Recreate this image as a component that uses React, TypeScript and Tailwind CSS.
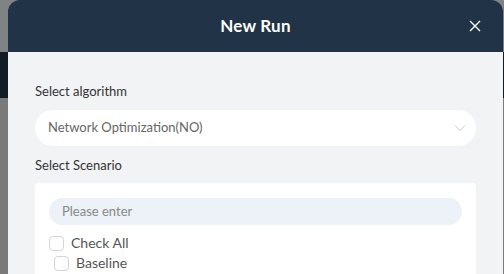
import React from 'react';

const font = { fontFamily: '"Lato", "Noto Sans", sans-serif' };

const Check = ({ label, className }: { label: string; className?: string }) => (
  <label className={`flex items-center h-[18px] gap-[7px] text-[14px] leading-[18px] text-[#555] ${className ?? ''}`}>
    <span className="w-[15px] h-[15px] rounded-[4px] border border-[#d4d4d8] bg-white shrink-0" />
    {label}
  </label>
);

export default function App() {
  return (
    <div className="relative w-[504px] h-[274px] overflow-hidden bg-[#7a7a7a]" style={font}>
      <div className="absolute left-0 top-0 w-full h-[52px] bg-[#7f8383]" />
      <div className="absolute left-0 top-[52px] w-full h-[46px] bg-[#121c25]" />
      <div className="absolute left-[8px] top-0 w-[495px] h-[274px] flex flex-col rounded-t-[12px] overflow-hidden">
        <div className="h-[52px] shrink-0 bg-[#213346] flex items-center justify-center relative">
          <span className="text-white text-[17px] font-bold tracking-[0.2px]">New Run</span>
          <svg
            className="absolute right-[22px] top-[20px]"
            width="12"
            height="12"
            viewBox="0 0 12 12"
            fill="none"
            stroke="white"
            strokeWidth="1.4"
          >
            <path d="M1 1L11 11M11 1L1 11" />
          </svg>
        </div>
        <div className="flex-1 bg-[#f2f3f5] px-[27px] pt-[30px]">
          <div className="text-[13px] text-[#333] leading-[18px]">Select algorithm</div>
          <div className="mt-[10px] h-[36px] rounded-full bg-white flex items-center justify-between pl-[13px] pr-[10px]">
            <span className="text-[13px] text-[#666]">Network Optimization(NO)</span>
            <svg width="12" height="8" viewBox="0 0 12 8" fill="none" stroke="#c0c4cc" strokeWidth="1">
              <path d="M1 1.5L6 6.5L11 1.5" />
            </svg>
          </div>
          <div className="mt-[10px] text-[13px] text-[#333] leading-[18px]">Select Scenario</div>
          <div className="mt-[9px] bg-white rounded-[4px] px-[14px] pt-[15px] pb-[10px]">
            <div className="h-[27px] rounded-full bg-[#edf1f8] flex items-center pl-[13px] text-[13px] text-[#888]">
              Please enter
            </div>
            <Check label="Check All" className="mt-[9px]" />
            <Check label="Baseline" className="mt-[2px] ml-[5px]" />
          </div>
        </div>
      </div>
    </div>
  );
}
